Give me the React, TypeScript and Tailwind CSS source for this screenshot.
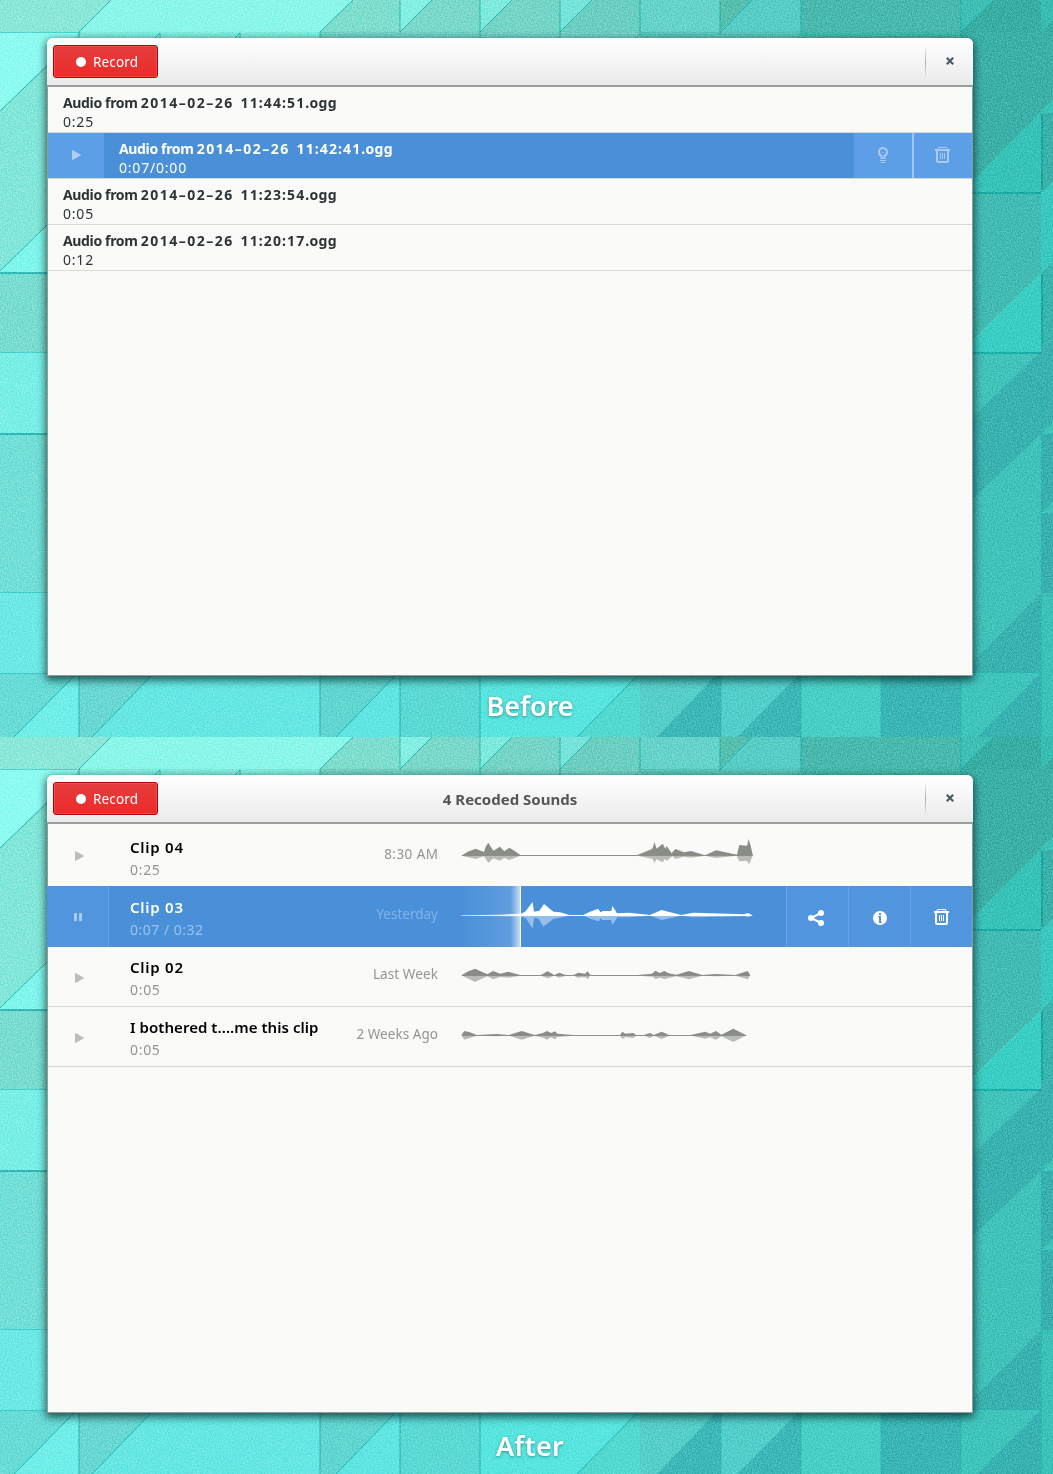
import React from 'react';

type Shape = [string, string];

const FACETS: Shape[] = [
  ['0,0 111,0 79,32 0,32', '#8ce8d9'],
  ['111,0 353,0 320,32 79,32', '#8bf7ea'],
  ['353,0 400,0 400,32 320,32', '#7edece'],
  ['400,0 432,0 400,32', '#84f0e4'],
  ['432,0 480,0 480,32 400,32', '#7ad9ca'],
  ['480,0 512,0 480,32', '#7eeade'],
  ['512,0 560,0 560,32 480,32', '#74d5c7'],
  ['560,0 592,0 560,32', '#76e4da'],
  ['592,0 640,0 640,32 560,32', '#6bcfc1'],
  ['640,0 720,0 720,32 640,32', '#66d3ca'],
  ['720,0 752,0 720,32', '#56bfae'],
  ['752,0 801,0 801,32 720,32', '#57cdc5'],
  ['801,0 961,0 961,38 801,38', '#49b9ae'],
  ['961,0 994,0 961,32', '#40bfb5'],
  ['994,0 1041,0 1041,38 961,38 961,32', '#38ada3'],
  ['1041,0 1053,0 1053,20 1041,32', '#38bdb2'],
  ['1053,20 1053,38 1041,38 1041,32', '#38ada3'],
  ['79,32 320,32 320,42 79,42', '#84efe2'],
  ['320,32 640,32 640,42 320,42', '#73d3c6'],
  ['640,32 801,32 801,42 640,42', '#5cc6bc'],
  ['0,32 80,32 0,111', '#8dfbf0'],
  ['80,32 80,193 0,193 0,111', '#82e7d9'],
  ['0,193 80,193 0,271', '#82e7d9'],
  ['80,193 80,273 0,273 0,271', '#80f6ec'],
  ['0,273 80,273 80,352 0,352', '#79ddd1'],
  ['0,352 80,352 80,434 0,434', '#79efe6'],
  ['0,434 80,434 80,592 0,592', '#72dfd7'],
  ['0,592 80,592 80,673 0,673', '#6de9e7'],
  ['0,673 77,673 14,737 0,737', '#68dcd7'],
  ['77,673 79,673 79,737 14,737', '#70eee9'],
  ['79,673 154,673 92,737 79,737', '#69d8d3'],
  ['154,673 320,673 320,737 92,737', '#66e7e4'],
  ['320,673 398,673 336,737 320,737', '#60d6d1'],
  ['398,673 400,673 400,737 336,737', '#60e5e3'],
  ['400,673 480,673 480,737 400,737', '#5bd9d4'],
  ['480,673 640,673 577,737 480,737', '#58e5df'],
  ['640,673 640,737 577,737', '#53d9d1'],
  ['640,673 718,673 657,737 640,737', '#56cec9'],
  ['718,673 721,673 721,737 657,737', '#3db8b8'],
  ['721,673 801,673 738,737 721,737', '#53ceca'],
  ['801,673 801,737 738,737', '#3db7b7'],
  ['801,673 881,673 881,737 801,737', '#49cfc5'],
  ['881,673 961,673 961,737 881,737', '#3bb5b5'],
  ['961,673 1041,673 978,737 961,737', '#3fc4bb'],
  ['1041,673 1041,737 978,737', '#38b2b1'],
  ['961,32 1053,32 1053,100 961,193', '#3bb0a7'],
  ['1053,100 1041,112 961,193 1041,193 1053,180', '#38c3b8'],
  ['1041,113 1053,113 1053,182 1041,193', '#3ab1a9'],
  ['961,193 1041,193 1041,273 961,352', '#42bbb3'],
  ['1041,193 1053,182 1053,262 1041,273', '#39c8bf'],
  ['1041,273 1041,353 961,353', '#39cec4'],
  ['1041,273 1053,262 1053,340 1041,352', '#39b5ae'],
  ['961,353 1041,353 961,428', '#41c3ba'],
  ['961,428 1053,340 1053,423 961,511', '#39b2b0'],
  ['961,511 1041,434 1041,593 961,673', '#40c2ba'],
  ['1041,434 1053,423 1053,434', '#40c2ba'],
  ['1041,434 1053,434 1053,593 1041,593', '#38b0ae'],
  ['1041,513 1053,502 1053,513', '#40c2ba'],
  ['1041,593 1041,673 961,673', '#39b2b0'],
  ['1041,593 1053,593 1053,737 1041,737', '#3cc1b9'],
];

const CREASES =
  'M111 0 79 32V38M353 0 320 32V38M400 0V32L432 0M480 0V38M480 32 512 0M560 0V38M560 32 592 0M640 0V34L636 38M720 0V34M721 32 752 0M801 0V34L797 38M961 0V38M961 32 994 0M48 65 0 111M48 224 0 271M77 673 14 737M79 676V737M154 673 92 737M320 676V737M398 673 336 737M400 676V737M480 676V737M640 673 577 737M155 38 160 33V38M235 38 240 33V38';

function Wallpaper() {
  return (
    <svg className="absolute inset-0 h-full w-full" viewBox="0 0 1053 737" preserveAspectRatio="none">
      <defs>
        <filter id="grain" x="0" y="0" width="100%" height="100%" colorInterpolationFilters="sRGB">
          <feTurbulence type="fractalNoise" baseFrequency="0.8" numOctaves="2" seed="4" />
          <feColorMatrix values="0 0 0 2.2 -.6  0 0 0 2.2 -.6  0 0 0 2.2 -.6  0 0 0 0 1" />
        </filter>
      </defs>
      <rect width="1053" height="737" fill="#68dcd2" />
      {FACETS.map(([points, fill]) => (
        <polygon key={points} points={points} fill={fill} />
      ))}
      <path d={CREASES} fill="none" stroke="#12a7a5" strokeWidth="1" opacity=".75" />
      <path
        d="M0 273H48M0 434H48M973 193H1041M1042 114V190M973 353H1041M1042 274V343"
        fill="none"
        stroke="#0b9d9b"
        strokeWidth="1.4"
        opacity=".85"
      />
      <path
        d="M0 32.5H80M0 352.5H48M0 592.5H48M0 673.5H48M721 676V737M801 676V737M881 676V737M961 676V737M1041.500 353V737M738 737 801 673M978 737 1041 673M973 672.500H1041"
        fill="none"
        stroke="#23b5b2"
        opacity=".55"
      />
      <rect width="1053" height="737" filter="url(#grain)" className="opacity-25 mix-blend-overlay" />
    </svg>
  );
}

function Play({ className }: { className: string }) {
  return (
    <svg className={className} width="9" height="10" viewBox="0 0 9 10" fill="currentColor">
      <path d="M0 .4Q0 0 .5 0L8.600 4.500Q9 5 8.600 5.500L.5 10Q0 10 0 9.600Z" />
    </svg>
  );
}

function Trash({ className = '' }: { className?: string }) {
  return (
    <svg className={className} width="15" height="16" viewBox="0 0 15 16" fill="none" stroke="currentColor">
      <path d="M3 2V1.500Q3 .5 4 .5H11Q12 .5 12 1.500V2" />
      <path d="M0 3H15" strokeWidth="2" />
      <path d="M2 4V14Q2 15 3 15H12Q13 15 13 14V4" strokeWidth="2" />
      <path d="M5.500 6V12M7.500 6V12M9.500 6V12" />
    </svg>
  );
}

function Bulb() {
  return (
    <svg width="10" height="16" viewBox="0 0 10 16" fill="none" stroke="currentColor">
      <path d="M3.500 11V9Q1 7.800 1 5A4 4 0 0 1 9 5Q9 7.800 6.500 9V11" strokeWidth="2" />
      <path d="M2.500 11.500H7.500" />
      <path d="M4 5.500H6" opacity=".5" />
      <path d="M2 13.500H8M3 15.500H7" />
    </svg>
  );
}

function Share() {
  return (
    <svg width="16" height="16" viewBox="0 0 16 16" fill="currentColor">
      <path d="M13 3 3 8 13 13" fill="none" stroke="currentColor" strokeWidth="2" />
      <circle cx="3" cy="8" r="3" />
      <circle cx="13" cy="3" r="3" />
      <circle cx="13" cy="13" r="3" />
    </svg>
  );
}

function Info() {
  return (
    <svg width="14" height="14" viewBox="0 0 14 14">
      <circle cx="7" cy="7" r="7" fill="#fff" />
      <path d="M6 2H8V4H6ZM5 5H8V11H9V12H6V6H5Z" fill="#5295df" />
    </svg>
  );
}

function Header({ title }: { title?: string }) {
  return (
    <div className="relative flex h-[49px] items-start rounded-t-[6px] border-b-2 border-[#9a9e99] bg-linear-to-b from-white to-[#ebebeb] pl-[6px] pt-[7px]">
      <button className="flex h-[33px] w-[105px] items-center rounded-[3px] border border-[#b90000] bg-linear-to-b from-[#e23c3c] to-[#ef2929] pl-[22px] pt-px text-[13.500px] text-white shadow-[inset_0_0_0_1px_rgba(255,120,120,0.35)]">
        <span className="-mt-px mr-[7px] h-[10px] w-[10px] rounded-full bg-white" />
        <span className="tracking-[0.15px]">Record</span>
      </button>
      {title && (
        <h1 className="absolute inset-x-0 top-[14px] text-center text-[15px] font-bold leading-[20px] text-[#555753]">
          {title}
        </h1>
      )}
      <span className="ml-auto h-[34px] w-px bg-linear-to-b from-transparent via-[#aaa] to-transparent" />
      <button className="flex h-[34px] w-[47px] items-center justify-center pb-[2px]">
        <svg width="8" height="8" viewBox="0 0 8 8" className="ml-px">
          <path d="M.8 .8 7.200 7.200M7.200 .8 .8 7.200" stroke="#4c5a61" strokeWidth="2.200" />
        </svg>
      </button>
    </div>
  );
}

function Window({ title, children }: { title?: string; children: React.ReactNode }) {
  return (
    <div className="ml-[47px] h-[638px] w-[926px] rounded-t-[6px] bg-[#fafaf8] shadow-[0_3px_9px_1px_rgba(0,35,35,0.75)]">
      <Header title={title} />
      <div className="h-[589px] border-x border-b border-[#989b96]">{children}</div>
    </div>
  );
}

function Scene({ caption, children }: { caption: string; children: React.ReactNode }) {
  return (
    <section className="relative h-[737px] overflow-hidden">
      <Wallpaper />
      <div className="relative pt-[38px]">
        {children}
        {caption === 'Before' ? (
          <p className="ml-[7px] mt-[11px] text-center text-[27px] font-semibold leading-[38px] text-white [text-shadow:0_1px_3px_rgba(0,70,70,0.5)]">
            Before
          </p>
        ) : (
          <p className="ml-[7px] mt-[14px] text-center text-[27px] font-semibold leading-[38px] tracking-[0.3px] text-white [text-shadow:0_1px_3px_rgba(0,70,70,0.5)]">
            After
          </p>
        )}
      </div>
    </section>
  );
}

const FILES = [
  ['2014–02–26', '11:44:51', '0:25'],
  ['2014–02–26', '11:42:41', '0:07/0:00'],
  ['2014–02–26', '11:23:54', '0:05'],
  ['2014–02–26', '11:20:17', '0:12'],
];

function FileRow({ date, clock, time, active }: { date: string; clock: string; time: string; active: boolean }) {
  return (
    <div
      className={
        active
          ? 'flex h-[46px] border-b border-[#d6d6d6] bg-[#4a90d9] text-white'
          : 'flex h-[46px] border-b border-[#d9d9d7] text-[#2e3436]'
      }
    >
      {active && (
        <div className="flex w-[56px] items-center justify-center bg-[#5c9fe6] pb-px text-[#b1cff2]">
          <Play className="ml-px" />
        </div>
      )}
      <div className="pl-[15px] pt-[6px]">
        <div className="whitespace-nowrap text-[14px] font-bold leading-[19px]">
          <span className="tracking-[-0.350px]">Audio from </span>
          <span className="tracking-[1.500px]">{date}</span>{' '}
          <span className="ml-[3px] tracking-[1.100px]">{clock}</span>
          <span className="tracking-[0.300px]">.ogg</span>
        </div>
        <div className="text-[14px] leading-[19px] tracking-[0.800px]">{time}</div>
      </div>
      {active && (
        <div className="ml-auto flex text-[#a9cbf3]">
          <div className="flex w-[58px] items-center justify-center bg-[#5c9fe6] pb-px">
            <Bulb />
          </div>
          <div className="w-[2px] bg-[#a3c6ee]" />
          <div className="flex w-[58px] items-center justify-center bg-[#5c9fe6] pb-px">
            <Trash className="-ml-px" />
          </div>
        </div>
      )}
    </div>
  );
}

const WAVES = [
  {
    up: 'M64 107 83 95 107 86 132 96 137 80 145 68 160 92 180 80 193 94 208 83 223 92 241 105H592L636 87 639 82 643 66 650 86 668 71 676 86 680 78 695 100 706 87 732 97 753 93 795 106 828 91 891 104 898 75 921 77 926 57 932 78 939 107Z',
    down: 'M64 107 107 117 132 109 145 128 160 115 180 122 193 113 208 120 241 107H592L638 117 643 129 650 118 668 127 675 116 680 123 697 108 706 117 732 110 753 113 795 107 828 114 890 107 898 124 921 122 927 133 938 107Z',
    line: 'M66 106.500H938',
  },
  {
    up: 'M64 106 180 104 241 101 255 96 278 66 282 95 298 92 312 72 340 95 360 97 388 105H430L450 95 475 86 481 97 489 93H514L517 77 531 100 568 98 630 105 664 90 724 105 760 98 912 103 924 99 937 106 937 107H64Z',
    down: 'M64 106 241 110 258 115 278 146 282 114 296 116 310 140 340 117 388 107H430L455 118 477 124 481 115 487 120H513L517 135 532 112 568 112 630 107 665 120 724 107 760 112 912 109 925 112 937 106Z',
    line: 'M241 106.500H934',
  },
  {
    up: 'M64 106 82 95 105 86 142 103 159 93 181 101 205 95 240 105H302L323 94 343 105 358 98 377 105H401L414 98 435 101 443 94 451 105H593L636 101 646 92 659 99 673 93 686 100 709 104 747 93 787 105 825 102 886 105 923 93 931 106Z',
    down: 'M64 106 105 126 142 109 159 118 181 111 205 113 240 107H302L323 115 343 107 358 113 377 107H401L414 113 435 111 443 118 451 107H593L639 110 646 117 659 113 673 117 709 109 747 118 787 107 825 109 886 107 923 118 931 106Z',
    line: 'M66 106.500H930',
  },
  {
    up: 'M64 106 73 93 90 97 110 105 170 102 207 105 245 93 284 105 309 99 321 93 333 99 345 94 352 101 400 105H540L547 95 556 101 580 99 588 105H612L630 99 641 105 665 95 688 105H752L796 95 810 101 828 93 844 104 880 86 919 106Z',
    down: 'M64 106 73 119 110 107 170 109 207 107 245 119 284 107 311 114 321 119 333 112 345 118 352 111 400 107H540L548 117 556 111 580 114 588 107H612L630 114 641 107 665 117 688 107H752L796 116 810 112 828 119 844 109 880 126 919 106Z',
    line: 'M66 106.500H919',
  },
];

function Wave({ index, active }: { index: number; active: boolean }) {
  const { up, down, line } = WAVES[index];
  return (
    <svg width="295" height="61" viewBox="60 15 885 183" className={active ? 'text-white' : 'text-[#8a8d86]'}>
      <path d={down} fill="currentColor" opacity={active ? 0.42 : 0.58} />
      <path d={up} fill="currentColor" />
      <path d={line} stroke="currentColor" strokeWidth="2.800" />
    </svg>
  );
}

interface Clip {
  name: string;
  time: string;
  date: string;
  row: string;
  text: string;
  play: string;
  wave: string;
  title: string;
  dateText: string;
}

const CLIPS: Clip[] = [
  { name: 'Clip 04', time: '0:25', date: '8:30 AM', row: 'h-[62px]', text: 'pt-[12px]', play: 'mt-[27px]', wave: 'pt-[1px]', title: 'text-[15px] tracking-[0.750px]', dateText: 'text-[#949593] tracking-[0.450px] -mr-[0.500px]' },
  { name: 'Clip 03', time: '0:07 / 0:32', date: 'Yesterday', row: 'h-[61px]', text: 'pt-[10px]', play: 'mt-[27px]', wave: '-mt-px', title: 'text-[15px] tracking-[0.750px]', dateText: 'text-[#80b2e8]' },
  { name: 'Clip 02', time: '0:05', date: 'Last Week', row: 'h-[60px] border-b border-[#d5d6d4]', text: 'pt-[9px]', play: 'mt-[26px]', wave: '-mt-[2px]', title: 'text-[15px] tracking-[0.750px]', dateText: 'text-[#949593] tracking-[0.100px]' },
  { name: 'I bothered t....me this clip', time: '0:05', date: '2 Weeks Ago', row: 'h-[60px] border-b border-[#d5d6d4]', text: 'pt-[9px]', play: 'mt-[26px]', wave: '-mt-[2px]', title: 'text-[15px] tracking-[0.050px]', dateText: 'text-[#949593] tracking-[0.050px]' },
];

function ClipRow({ clip, index }: { clip: Clip; index: number }) {
  const active = index === 1;
  return (
    <div className={clip.row}>
      <div className={active ? '-ml-px flex h-full bg-[#4a90d9] pl-px text-white' : 'flex h-full text-black'}>
        {active ? (
          <div className="-ml-px flex w-[62px] justify-start border-r border-[#6aa4e2] bg-[#5295df] pl-[27px]">
            <div className="mt-[27px] flex h-[8px] gap-[2px]">
              <span className="w-[3px] bg-[#a8caef]" />
              <span className="w-[3px] bg-[#a8caef]" />
            </div>
          </div>
        ) : (
          <div className="w-[61px] pl-[27px] text-[#bdbdbc]">
            <div className={clip.play}>
              <Play className="block" />
            </div>
          </div>
        )}
        <div className={`${clip.text} w-[210px] pl-[21px]`}>
          <div className={`${clip.title} whitespace-nowrap font-semibold leading-[23px]`}>{clip.name}</div>
          <div
            className={
              active
                ? 'text-[14px] leading-[22px] tracking-[0.500px] text-[#9dc2ed]'
                : 'text-[14px] leading-[22px] tracking-[0.700px] text-[#949593]'
            }
          >
            {clip.time}
          </div>
        </div>
        <div className={`${clip.text} w-[119px] text-right`}>
          <div className={`${clip.dateText} mt-[8px] text-[13.500px] leading-[20px]`}>{clip.date}</div>
        </div>
        <div className="relative ml-[22px]">
          {active && (
            <div className="absolute left-[2px] top-0 h-[61px] w-[59px] border-r border-white bg-[linear-gradient(to_right,rgba(255,255,255,0),rgba(255,255,255,0.12)_84%,rgba(255,255,255,0.7))]" />
          )}
          <div className={`${clip.wave} relative`}>
            <Wave index={index} active={active} />
          </div>
        </div>
        {active && (
          <div className="ml-auto flex bg-[#5295df]">
            <div className="flex w-[62px] items-center justify-center border-l border-[#6aa4e2] pt-[3px]">
              <span className="-ml-[3px]">
                <Share />
              </span>
            </div>
            <div className="flex w-[62px] items-center justify-center border-l border-[#6aa4e2] pt-[3px]">
              <Info />
            </div>
            <div className="flex w-[62px] items-center justify-center border-l border-[#6aa4e2] pt-px">
              <Trash className="-ml-px" />
            </div>
          </div>
        )}
      </div>
    </div>
  );
}

export default function App() {
  return (
    <main className="h-[1474px] w-[1053px] overflow-hidden font-['Noto_Sans','Open_Sans',sans-serif]">
      <Scene caption="Before">
        <Window>
          {FILES.map(([date, clock, time], i) => (
            <FileRow key={clock} date={date} clock={clock} time={time} active={i === 1} />
          ))}
        </Window>
      </Scene>
      <Scene caption="After">
        <Window title="4 Recoded Sounds">
          {CLIPS.map((clip, i) => (
            <ClipRow key={clip.name} clip={clip} index={i} />
          ))}
        </Window>
      </Scene>
    </main>
  );
}
